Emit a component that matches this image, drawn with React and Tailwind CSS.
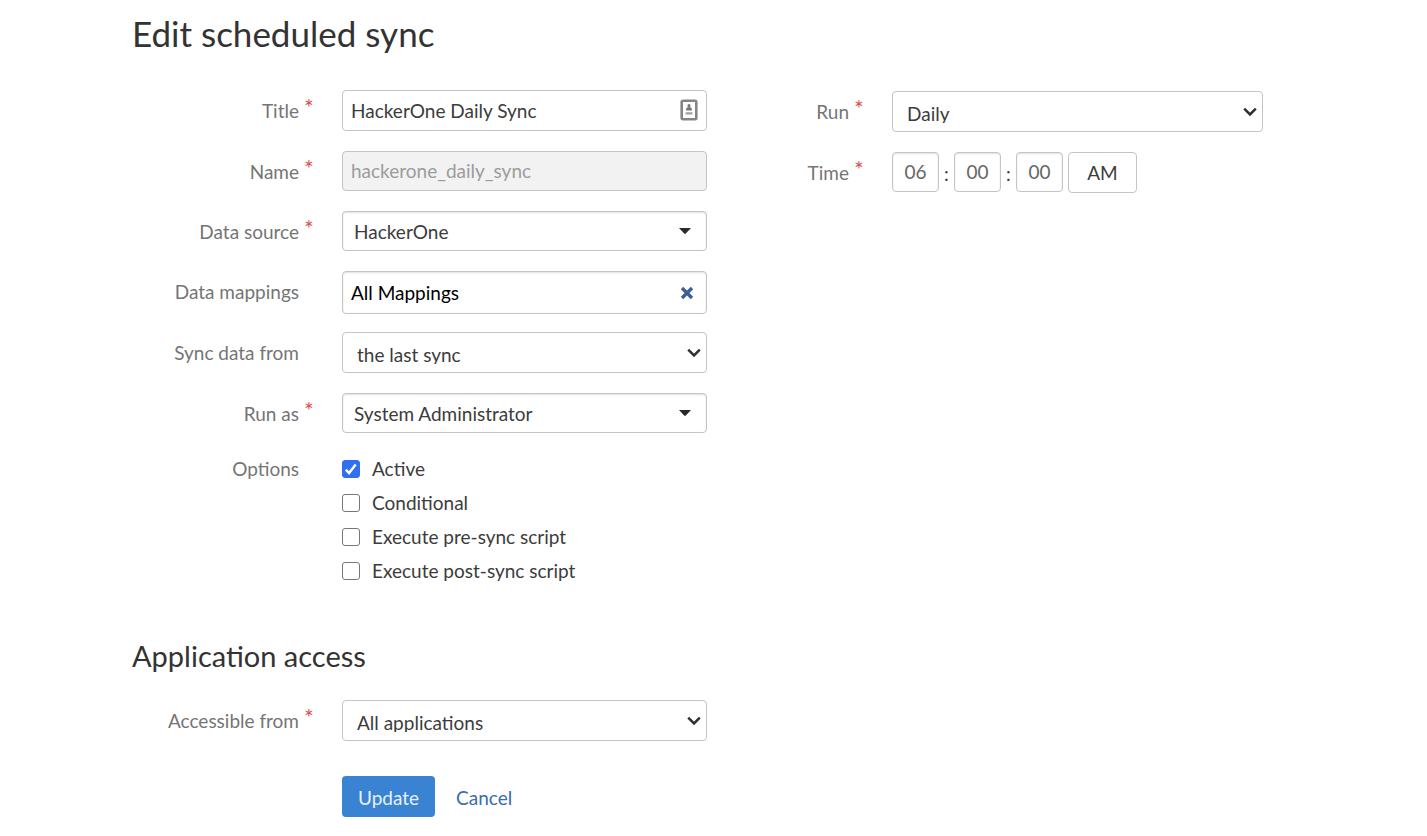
import { useState } from "react";

const fieldBase =
  "block w-full rounded-[4px] border border-[#c4c4c4] bg-white text-[19px] text-[#3c3c3c] outline-none focus:border-[#3a82d2]";

function Required() {
  return (
    <span aria-hidden="true" className="absolute -top-1 left-full pl-[5px] text-[23px] leading-8 text-[#d9534f]">
      *
    </span>
  );
}

function Label({ htmlFor, required, children }) {
  return (
    <div className="flex justify-end pr-[43px] pt-[5px]">
      <label htmlFor={htmlFor} className="relative text-[19px] leading-8 whitespace-nowrap text-[#757575]">
        {children}
        {required && <Required />}
      </label>
    </div>
  );
}

function Row({ id, label, required, children, className = "" }) {
  return (
    <div className={`grid grid-cols-[210px_1fr] ${className}`}>
      <Label htmlFor={id} required={required}>
        {label}
      </Label>
      {children}
    </div>
  );
}

function Chevron() {
  return (
    <svg viewBox="0 0 14 10" aria-hidden="true" className="pointer-events-none absolute top-4 right-[6px] h-[10px] w-[14px]">
      <path d="M1.2 1.6 7 7.4l5.8-5.8" fill="none" stroke="#2f2f2f" strokeWidth="2.5" />
    </svg>
  );
}

function Caret() {
  return (
    <svg viewBox="0 0 12 6" aria-hidden="true" className="pointer-events-none absolute top-[17px] right-4 h-[6px] w-3">
      <path d="M0 0h12L6.8 5.6q-.8.8-1.6 0Z" fill="#2a2a2a" />
    </svg>
  );
}

function NativeSelect({ id, options }) {
  return (
    <div className="relative">
      <select id={id} className={`${fieldBase} h-[41px] appearance-none pt-2 pr-8 pb-2 pl-[14px]`}>
        {options.map((o) => (
          <option key={o}>{o}</option>
        ))}
      </select>
      <Chevron />
    </div>
  );
}

function PickerSelect({ id, options }) {
  return (
    <div className="relative">
      <select
        id={id}
        className={`${fieldBase} h-10 appearance-none pt-[3px] pr-8 pl-[11px] shadow-[inset_0_1px_2px_rgba(0,0,0,0.12)]`}
      >
        {options.map((o) => (
          <option key={o}>{o}</option>
        ))}
      </select>
      <Caret />
    </div>
  );
}

function Check({ label, defaultChecked = false }) {
  const [on, setOn] = useState(defaultChecked);
  return (
    <label className="flex h-[34px] items-center gap-3 text-[19px] text-[#3c3c3c]">
      <span className="relative flex h-[18px] w-[18px]">
        <input
          type="checkbox"
          checked={on}
          onChange={(e) => setOn(e.target.checked)}
          className="h-[18px] w-[18px] appearance-none rounded-[3px] border border-[#767676] bg-white checked:border-[#2f6ff0] checked:bg-[#2f6ff0]"
        />
        {on && (
          <svg viewBox="0 0 18 18" aria-hidden="true" className="pointer-events-none absolute inset-0 h-[18px] w-[18px]">
            <path d="m3.8 9.6 3.3 3.5 6.6-8.5" fill="none" stroke="#fff" strokeWidth="2.4" />
          </svg>
        )}
      </span>
      {label}
    </label>
  );
}

function TimePart({ id, label, value }) {
  return (
    <input
      id={id}
      aria-label={label}
      defaultValue={value}
      className="h-10 w-[47px] rounded-[4px] border border-[#c4c4c4] bg-white pb-[2px] text-center text-[19px] text-[#666] shadow-[inset_0_1px_2px_rgba(0,0,0,0.12)] outline-none"
    />
  );
}

export default function App() {
  const [mapping, setMapping] = useState("All Mappings");
  const [meridiem, setMeridiem] = useState("AM");

  return (
    <main className="min-h-screen bg-white pt-[11px] pr-[164px] pb-5 pl-[132px] font-['Lato',sans-serif]">
      <form onSubmit={(e) => e.preventDefault()}>
        <h1 className="text-[35px] leading-[44px] text-[#333]">Edit scheduled sync</h1>

        <div className="mt-[35px] grid grid-cols-[575fr_556fr] items-start">
          <div>
            <div className="grid gap-5">
              <Row id="title" label="Title" required>
                <div className="relative">
                  <input id="title" defaultValue="HackerOne Daily Sync" className={`${fieldBase} h-[41px] pr-10 pl-2`} />
                  <svg viewBox="0 0 18 22" aria-hidden="true" className="absolute top-[9px] right-[9px] h-[22px] w-[18px]">
                    <rect x="1.7" y="1.7" width="14.6" height="18.6" rx="1.2" fill="#fff" stroke="#858585" strokeWidth="2.6" />
                    <circle cx="9" cy="6.6" r="1.6" fill="#777" />
                    <path d="M6 11.4q0-3.4 3-3.4t3 3.4Z" fill="#777" />
                    <path d="M5.6 14.4h6.8" stroke="#a5a5a5" strokeWidth="2.4" />
                  </svg>
                </div>
              </Row>
              <Row id="name" label="Name" required>
                <input
                  id="name"
                  disabled
                  defaultValue="hackerone_daily_sync"
                  className="h-10 w-full rounded-[4px] border border-[#c4c4c4] bg-[#f2f2f2] px-2 pb-[2px] text-[19px] text-[#9c9c9c]"
                />
              </Row>
              <Row id="source" label="Data source" required>
                <PickerSelect id="source" options={["HackerOne"]} />
              </Row>
              <Row id="mappings" label="Data mappings" className="h-[41px]">
                <div className="relative">
                  <input
                    id="mappings"
                    value={mapping}
                    onChange={(e) => setMapping(e.target.value)}
                    className="h-[43px] w-full rounded-[4px] border border-[#c4c4c4] bg-white pr-10 pl-2 text-[19px] text-black shadow-[inset_0_1px_2px_rgba(0,0,0,0.12)] outline-none"
                  />
                  <button
                    type="button"
                    aria-label="Clear data mappings"
                    onClick={() => setMapping("")}
                    className="absolute top-[15px] right-[13px]"
                  >
                    <svg viewBox="0 0 14 14" aria-hidden="true" className="h-[14px] w-[14px]">
                      <path d="m2 2 10 10M12 2 2 12" stroke="#3c5f9b" strokeWidth="3.4" />
                    </svg>
                  </button>
                </div>
              </Row>
              <Row id="from" label="Sync data from">
                <NativeSelect id="from" options={["the last sync"]} />
              </Row>
              <Row id="runas" label="Run as" required>
                <PickerSelect id="runas" options={["System Administrator"]} />
              </Row>
            </div>
            <div role="group" aria-labelledby="options-label" className="mt-[19px] grid grid-cols-[210px_1fr]">
              <div id="options-label" className="pr-[43px] text-right text-[19px] leading-[34px] text-[#757575]">
                Options
              </div>
              <div>
                <Check label="Active" defaultChecked />
                <Check label="Conditional" />
                <Check label="Execute pre-sync script" />
                <Check label="Execute post-sync script" />
              </div>
            </div>
          </div>

          <div className="grid gap-5 pt-px">
            <div className="grid grid-cols-[185px_1fr]">
              <Label htmlFor="run" required>
                Run
              </Label>
              <NativeSelect id="run" options={["Daily"]} />
            </div>
            <div className="grid grid-cols-[185px_1fr]">
              <Label htmlFor="hour" required>
                Time
              </Label>
              <div className="flex items-start text-[19px] text-[#3c3c3c]">
                <TimePart id="hour" label="Hour" value="06" />
                <span className="w-[15px] text-center leading-[43px]">:</span>
                <TimePart id="minute" label="Minute" value="00" />
                <span className="w-[15px] text-center leading-[43px]">:</span>
                <TimePart id="second" label="Second" value="00" />
                <button
                  type="button"
                  onClick={() => setMeridiem(meridiem === "AM" ? "PM" : "AM")}
                  className="ml-[5px] h-[41px] w-[69px] rounded-[4px] border border-[#c4c4c4] pt-[2px]"
                >
                  {meridiem}
                </button>
              </div>
            </div>
          </div>
        </div>

        <h2 className="mt-12 text-[29px] leading-10 text-[#333]">Application access</h2>
        <div className="mt-6 grid grid-cols-[575fr_556fr]">
          <Row id="apps" label="Accessible from" required>
            <NativeSelect id="apps" options={["All applications"]} />
          </Row>
        </div>
        <div className="mt-[35px] flex items-center pl-[210px] text-[19px]">
          <button type="submit" className="h-[41px] rounded-[4px] bg-[#3a82d2] px-4 pt-[3px] text-[#e6f1fc]">
            Update
          </button>
          <a href="#cancel" className="ml-[21px] pt-[3px] text-[#3a6cab]">
            Cancel
          </a>
        </div>
      </form>
    </main>
  );
}
